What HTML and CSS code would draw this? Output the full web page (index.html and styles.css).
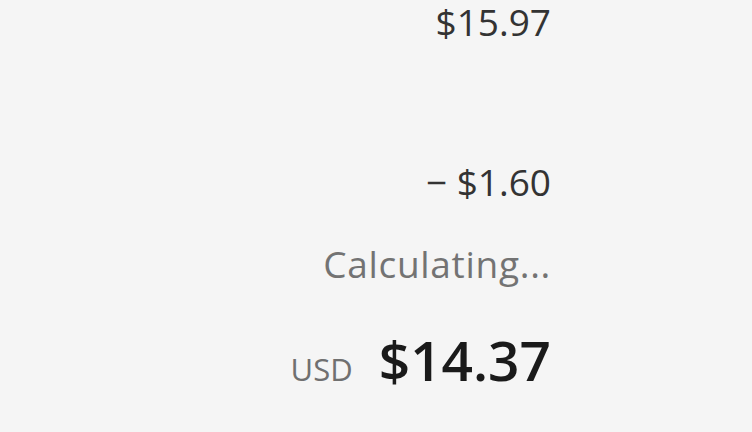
FILE: index.html
```html
<!DOCTYPE html>
<html>
<head>
<meta charset="utf-8">
<link rel="stylesheet" href="styles.css">
</head>
<body>
<div class="summary">
  <div class="row subtotal">$15.97</div>
  <div class="row discount">− $1.60</div>
  <div class="row shipping">Calculating...</div>
  <div class="row total">
    <span class="currency">USD</span>
    <span class="amount">$14.37</span>
  </div>
</div>
</body>
</html>
```
FILE: styles.css
```css
html, body {
  margin: 0;
  padding: 0;
  background: #f5f5f5;
}
body {
  width: 752px;
  height: 432px;
  overflow: hidden;
  font-family: "Open Sans", "Noto Sans", sans-serif;
}
.summary {
  width: 551px;
  display: flex;
  flex-direction: column;
  align-items: flex-end;
}
.row {
  font-size: 37px;
  line-height: 1;
  color: #333333;
}
.subtotal {
  margin-top: 3px;
}
.discount {
  margin-top: 123px;
}
.shipping {
  margin-top: 45px;
  color: #737373;
  letter-spacing: 0.7px;
}
.total {
  margin-top: 50px;
  display: flex;
  align-items: baseline;
  gap: 26px;
  letter-spacing: 0;
}
.currency {
  font-size: 31px;
  color: #707070;
}
.amount {
  font-size: 55px;
  font-weight: 600;
  color: #1a1a1a;
}
```
